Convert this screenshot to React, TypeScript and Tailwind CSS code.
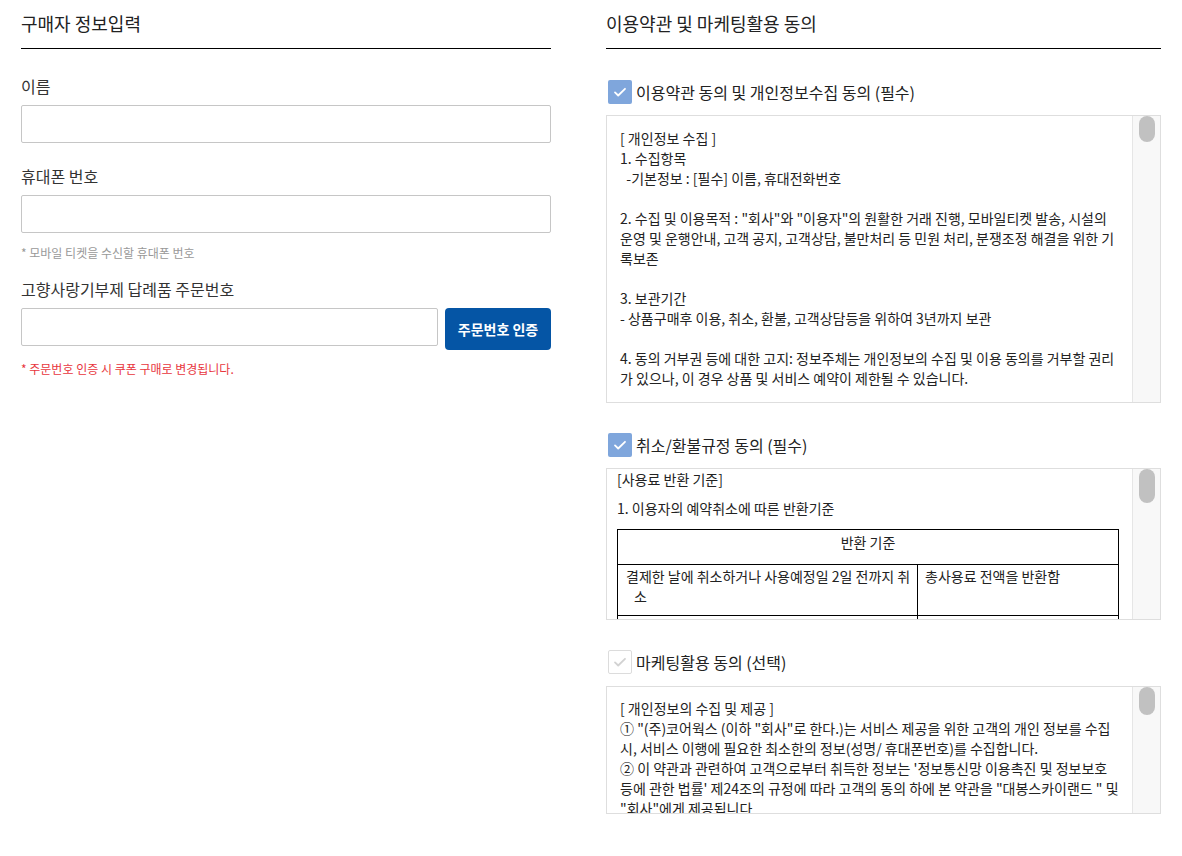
import React from 'react';

const FONT = { fontFamily: '"Noto Sans CJK KR", "Noto Sans", sans-serif' };

function Check({ on }: { on: boolean }) {
  return (
    <span
      className={
        on
          ? 'flex h-[24px] w-[24px] items-center justify-center rounded-[2px] bg-[#7fa6dc]'
          : 'flex h-[24px] w-[24px] items-center justify-center rounded-[2px] border border-[#dcdcdc] bg-white'
      }
    >
      <svg width="16" height="16" viewBox="0 0 16 16" fill="none">
        <path
          d="M3 8.4l3.2 3.1L13 4.8"
          stroke={on ? '#ffffff' : '#d2d2d2'}
          strokeWidth="1.8"
          strokeLinecap="round"
          strokeLinejoin="round"
        />
      </svg>
    </span>
  );
}

function ScrollBox({
  height,
  thumb,
  children,
}: {
  height: string;
  thumb: string;
  children: React.ReactNode;
}) {
  return (
    <div className={`flex border border-[#dedede] bg-white ${height}`}>
      <div className="flex-1 overflow-hidden">{children}</div>
      <div className="w-[28px] shrink-0 border-l border-[#e6e6e6] bg-[#f8f8f8] pl-[6px]">
        <div className={`w-[16px] rounded-full bg-[#c1c1c1] ${thumb}`} />
      </div>
    </div>
  );
}

function Field({ label, children }: { label: string; children: React.ReactNode }) {
  return (
    <div>
      <div className="text-[16px] leading-[24px] text-[#333]">{label}</div>
      <div className="mt-[7px]">{children}</div>
    </div>
  );
}

const box1 = [
  '[ 개인정보 수집 ]',
  '1. 수집항목',
  '\u00a0\u00a0-기본정보 : [필수] 이름, 휴대전화번호',
  '',
  '2. 수집 및 이용목적 : "회사"와 "이용자"의 원활한 거래 진행, 모바일티켓 발송, 시설의',
  '운영 및 운행안내, 고객 공지, 고객상담, 불만처리 등 민원 처리, 분쟁조정 해결을 위한 기',
  '록보존',
  '',
  '3. 보관기간',
  '- 상품구매후 이용, 취소, 환불, 고객상담등을 위하여 3년까지 보관',
  '',
  '4. 동의 거부권 등에 대한 고지: 정보주체는 개인정보의 수집 및 이용 동의를 거부할 권리',
  '가 있으나, 이 경우 상품 및 서비스 예약이 제한될 수 있습니다.',
];

const box3 = [
  '[ 개인정보의 수집 및 제공 ]',
  '① "(주)코어웍스 (이하 "회사"로 한다.)는 서비스 제공을 위한 고객의 개인 정보를 수집',
  '시, 서비스 이행에 필요한 최소한의 정보(성명/ 휴대폰번호)를 수집합니다.',
  '② 이 약관과 관련하여 고객으로부터 취득한 정보는 \'정보통신망 이용촉진 및 정보보호',
  '등에 관한 법률\' 제24조의 규정에 따라 고객의 동의 하에 본 약관을 "대봉스카이랜드 " 및',
  '"회사"에게 제공됩니다',
];

function Lines({ lines }: { lines: string[] }) {
  return (
    <div className="text-[14px] leading-[20px] text-[#222]">
      {lines.map((l, i) => (
        <div key={i} className="h-[20px] whitespace-pre">
          {l}
        </div>
      ))}
    </div>
  );
}

export default function App() {
  return (
    <div className="min-h-screen bg-white" style={FONT}>
      <div className="flex gap-[55px] px-[21px] pt-[10px]">
        {/* 구매자 정보 */}
        <div className="w-[530px] shrink-0">
          <h2 className="border-b border-black pb-[12px] text-[18px] leading-[26px] text-[#222]">
            구매자 정보입력
          </h2>
          <div className="mt-[25px] flex flex-col">
            <Field label="이름">
              <input className="h-[38px] w-full rounded-[2px] border border-[#c6c6c6] px-3 outline-none" />
            </Field>
            <div className="mt-[21px]">
              <Field label="휴대폰 번호">
                <input className="h-[38px] w-full rounded-[2px] border border-[#c6c6c6] px-3 outline-none" />
              </Field>
            </div>
            <p className="mt-[11px] text-[12px] leading-[18px] text-[#999]">
              * 모바일 티켓을 수신할 휴대폰 번호
            </p>
            <div className="mt-[15px]">
              <Field label="고향사랑기부제 답례품 주문번호">
                <div className="flex items-start gap-[7px]">
                  <input className="h-[38px] flex-1 rounded-[2px] border border-[#c6c6c6] px-3 outline-none" />
                  <button className="h-[42px] w-[106px] rounded-[4px] bg-[#0555a5] text-[14px] font-bold text-white">
                    주문번호 인증
                  </button>
                </div>
              </Field>
            </div>
            <p className="mt-[10px] text-[12px] leading-[18px] text-[#e8363d]">
              * 주문번호 인증 시 쿠폰 구매로 변경됩니다.
            </p>
          </div>
        </div>

        {/* 약관 동의 */}
        <div className="flex-1">
          <h2 className="border-b border-black pb-[12px] text-[18px] leading-[26px] text-[#222]">
            이용약관 및 마케팅활용 동의
          </h2>

          <label className="mt-[31px] flex items-center gap-[4px] pl-[2px]">
            <Check on />
            <span className="text-[16px] leading-[24px] text-[#222]">
              이용약관 동의 및 개인정보수집 동의 (필수)
            </span>
          </label>
          <div className="mt-[11px]">
            <ScrollBox height="h-[288px]" thumb="h-[26px]">
              <div className="pl-[13px] pt-[12px]">
                <Lines lines={box1} />
              </div>
            </ScrollBox>
          </div>

          <label className="mt-[30px] flex items-center gap-[4px] pl-[2px]">
            <Check on />
            <span className="text-[16px] leading-[24px] text-[#222]">취소/환불규정 동의 (필수)</span>
          </label>
          <div className="mt-[11px]">
            <ScrollBox height="h-[152px]" thumb="h-[34px]">
              <div className="pl-[10px] pr-[13px] text-[14px] leading-[20px] text-[#222]">
                <p>[사용료 반환 기준]</p>
                <p className="mt-[9px]">1. 이용자의 예약취소에 따른 반환기준</p>
                <table className="mt-[11px] w-full border-collapse">
                  <tbody>
                    <tr>
                      <td colSpan={2} className="h-[35px] border border-black pt-[2px] text-center align-top">
                        반환 기준
                      </td>
                    </tr>
                    <tr>
                      <td className="h-[51px] w-[300px] border border-black pl-[16px] pr-[4px] pt-[1px] align-top indent-[-8px]">
                        결제한 날에 취소하거나 사용예정일 2일 전까지 취소
                      </td>
                      <td className="border border-black px-[7px] pt-[1px] align-top">총사용료 전액을 반환함</td>
                    </tr>
                    <tr>
                      <td className="h-[40px] border border-black" />
                      <td className="border border-black" />
                    </tr>
                  </tbody>
                </table>
              </div>
            </ScrollBox>
          </div>

          <label className="mt-[30px] flex items-center gap-[4px] pl-[2px]">
            <Check on={false} />
            <span className="text-[16px] leading-[24px] text-[#222]">마케팅활용 동의 (선택)</span>
          </label>
          <div className="mt-[12px]">
            <ScrollBox height="h-[128px]" thumb="h-[28px]">
              <div className="pl-[13px] pt-[11px]">
                <Lines lines={box3} />
              </div>
            </ScrollBox>
          </div>
        </div>
      </div>
    </div>
  );
}
